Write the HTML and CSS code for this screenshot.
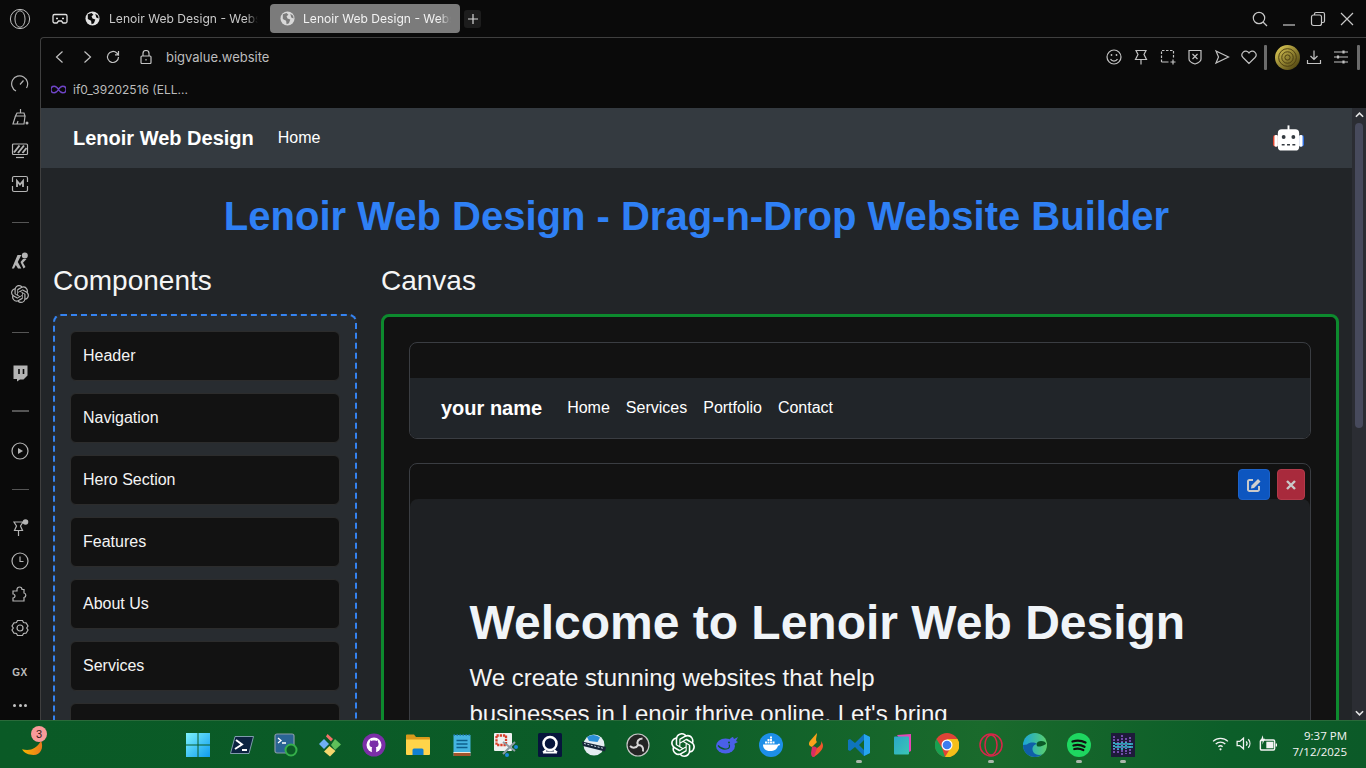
FILE: index.html
```html
<!DOCTYPE html>
<html lang="en">
<head>
<meta charset="utf-8">
<title>Lenoir Web Design</title>
<link rel="stylesheet" href="styles.css">
</head>
<body>
<svg class="defs" width="0" height="0"><defs>
  <path id="knot" d="M22.2819 9.8211a5.9847 5.9847 0 0 0-.5157-4.9108 6.0462 6.0462 0 0 0-6.5098-2.9A6.0651 6.0651 0 0 0 4.9807 4.1818a5.9847 5.9847 0 0 0-3.9977 2.9 6.0462 6.0462 0 0 0 .7427 7.0966 5.98 5.98 0 0 0 .511 4.9107 6.051 6.051 0 0 0 6.5146 2.9001A5.9847 5.9847 0 0 0 13.2599 24a6.0557 6.0557 0 0 0 5.7718-4.2058 5.9894 5.9894 0 0 0 3.9977-2.9001 6.0557 6.0557 0 0 0-.7475-7.0729zm-9.022 12.6081a4.4755 4.4755 0 0 1-2.8764-1.0408l.1419-.0804 4.7783-2.7582a.7948.7948 0 0 0 .3927-.6813v-6.7369l2.02 1.1686a.071.071 0 0 1 .038.052v5.5826a4.504 4.504 0 0 1-4.4945 4.4944zm-9.6607-4.1254a4.4708 4.4708 0 0 1-.5346-3.0137l.142.0852 4.783 2.7582a.7712.7712 0 0 0 .7806 0l5.8428-3.3685v2.3324a.0804.0804 0 0 1-.0332.0615L9.74 19.9502a4.4992 4.4992 0 0 1-6.1408-1.6464zM2.3408 7.8956a4.485 4.485 0 0 1 2.3655-1.9728V11.6a.7664.7664 0 0 0 .3879.6765l5.8144 3.3543-2.0201 1.1685a.0757.0757 0 0 1-.071 0l-4.8303-2.7865A4.504 4.504 0 0 1 2.3408 7.872zm16.5963 3.8558L13.1038 8.364 15.1192 7.2a.0757.0757 0 0 1 .071 0l4.8303 2.7913a4.4944 4.4944 0 0 1-.6765 8.1042v-5.6772a.79.79 0 0 0-.407-.667zm2.0107-3.0231l-.142-.0852-4.7735-2.7818a.7759.7759 0 0 0-.7854 0L9.409 9.2297V6.8974a.0662.0662 0 0 1 .0284-.0615l4.8303-2.7866a4.4992 4.4992 0 0 1 6.6802 4.66zM8.3065 12.863l-2.02-1.1638a.0804.0804 0 0 1-.038-.0567V6.0742a4.4992 4.4992 0 0 1 7.3757-3.4537l-.142.0805L8.704 5.459a.7948.7948 0 0 0-.3927.6813zm1.0976-2.3654l2.602-1.4998 2.6069 1.4998v2.9994l-2.5974 1.4997-2.6067-1.4997Z"/>
</defs></svg>
<div class="desktop">
  <div class="browser">
    <header class="tabbar">
      <div class="logo-cell">
        <svg class="i22" viewBox="0 0 24 24"><circle cx="12" cy="12" r="10.5"/><ellipse cx="12" cy="12" rx="5.5" ry="9"/></svg>
      </div>
      <div class="game-cell">
        <svg class="i16" viewBox="0 0 16 16"><path d="M2.5 3.5h11a1.5 1.5 0 0 1 1.5 1.5v5.5a1.5 1.5 0 0 1-1.5 1.5H11L9.5 10h-3L5 12H2.5A1.5 1.5 0 0 1 1 10.500V5a1.500 1.500 0 0 1 1.500-1.500z"/><path d="M4 7.500h2M10 7.500h2"/></svg>
      </div>
      <div class="tab">
        <svg class="globe" viewBox="0 0 16 16"><circle cx="8" cy="8" r="7.5"/><path class="land" d="M3 3.500 7 2l2 2-2 1.500L8 8l3 1-1.500 4L7 14l-.5-3.500L3 8.500zM11 3l3 2 .5 3-2.500-1z"/></svg>
        <span class="tab-text">Lenoir Web Design - Website Builder</span>
      </div>
      <div class="tab tab-active">
        <svg class="globe" viewBox="0 0 16 16"><circle cx="8" cy="8" r="7.500"/><path class="land" d="M3 3.500 7 2l2 2-2 1.500L8 8l3 1-1.500 4L7 14l-.5-3.500L3 8.500zM11 3l3 2 .5 3-2.500-1z"/></svg>
        <span class="tab-text">Lenoir Web Design - Website Builder</span>
      </div>
      <div class="newtab"><svg class="i10" viewBox="0 0 10 10"><path d="M5 0v10M0 5h10"/></svg></div>
      <div class="winctl">
        <svg class="i16" viewBox="0 0 16 16"><circle cx="7" cy="7" r="5.700"/><path d="m11 11 4 4"/></svg>
        <svg class="i16" viewBox="0 0 16 16"><path d="M2 14h12"/></svg>
        <svg class="i16" viewBox="0 0 16 16"><rect x="1.500" y="4" width="10" height="10.500" rx="2"/><path d="M4.500 4V3a1.500 1.500 0 0 1 1.500-1.500h7A1.500 1.500 0 0 1 14.500 3v7a1.500 1.500 0 0 1-1.500 1.500h-1.500"/></svg>
        <svg class="i16" viewBox="0 0 16 16"><path d="m2 2 12 12M14 2 2 14"/></svg>
      </div>
    </header>
    <div class="main">
      <aside class="sidebar">
        <div class="side-cell"><svg class="i18" viewBox="0 0 18 18"><path d="M5 16A8 8 0 1 1 15.500 13M9 9.500l3.500-4"/></svg></div>
        <div class="side-cell"><svg class="i18" viewBox="0 0 18 18"><path d="M9.500 1v4M6 5h7l1 3H4.500zM4.500 8 2 16h11l1-8M6 16l1-3"/><circle class="solid" cx="16" cy="15" r="1.500"/></svg></div>
        <div class="side-cell"><svg class="i18" viewBox="0 0 18 18"><rect x="1.500" y="2" width="15" height="10.500" rx="1"/><path class="stripes" d="M3 10.500l5.500-7M7 11l6-7.500M11.500 11l4-5"/><path d="M5 15.500h8"/></svg></div>
        <div class="side-cell"><svg class="i18" viewBox="0 0 18 18"><path d="M3 1.500h12a1.500 1.500 0 0 1 1.500 1.500v4M16.500 11v4a1.500 1.500 0 0 1-1.500 1.500H3A1.500 1.500 0 0 1 1.500 15v-4M1.500 7V3A1.500 1.500 0 0 1 3 1.500"/><path class="m-letter" d="M6 12V6l3 3.500L12 6v6"/></svg></div>
        <div class="side-sep"></div>
        <div class="side-cell"><svg class="i18" viewBox="0 0 18 18"><path class="solid" d="M6.500 3h3.800L6.800 10l3.500 6.500H7L4.800 13 3 16.500H.8z"/><path class="solid" d="M9.500 10 12 7h3.500L12 10.800l2.500 4.200-2 1.500z"/><circle class="solid" cx="13.800" cy="3.500" r="3"/></svg></div>
        <div class="side-cell"><svg class="i18 knot-ic" viewBox="0 0 24 24"><use href="#knot"/></svg></div>
        <div class="side-sep"></div>
        <div class="side-cell side-push"><svg class="i18" viewBox="0 0 18 18"><path class="solid" d="M2.500 1.500h14v10l-4 4H9L6 17.500V15H2.500z"/><path class="cut" d="M8 5v5M12.500 5v5"/></svg></div>
        <div class="side-sep"></div>
        <div class="side-cell side-push"><svg class="i18" viewBox="0 0 18 18"><circle cx="9" cy="9" r="8"/><path class="solid" d="M7 6l5 3-5 3z"/></svg></div>
        <div class="side-sep"></div>
        <div class="side-cell"><svg class="i18" viewBox="0 0 18 18"><path d="M3 3h9l-2.500 4 2 4.500H3.500l2-4.500zM7.500 11.500v5.500"/><circle class="solid" cx="14.500" cy="3" r="2.800"/></svg></div>
        <div class="side-cell"><svg class="i18" viewBox="0 0 18 18"><circle cx="9" cy="9" r="8"/><path d="M9 4.500V9.500h3.500"/></svg></div>
        <div class="side-cell"><svg class="i18" viewBox="0 0 18 18"><path d="M6 3.500a2.500 2.500 0 0 1 5 0H13v3.500a2.300 2.300 0 0 1 0 4.500V15H2v-3a2 2 0 0 0 0-4V5h4z"/></svg></div>
        <div class="side-cell"><svg class="i18" viewBox="0 0 18 18"><path d="M6.500 1.500h5L12.500 3.500l2.500.3 2 3.200-1.300 2 1.300 2-2 3.200-2.500.3-1 2h-5l-1-2L3 14.200 1 11l1.300-2L1 7l2-3.200 2.500-.3z"/><circle cx="9" cy="9" r="3"/></svg></div>
        <div class="side-gx">GX</div>
        <div class="side-dots"><i></i><i></i><i></i></div>
      </aside>
      <div class="frame">
        <div class="toolbar">
          <div class="nav-icons">
            <svg class="i14" viewBox="0 0 14 14"><path d="M9.500 1.500 3.500 7l6 5.500"/></svg>
            <svg class="i14" viewBox="0 0 14 14"><path d="m4.500 1.500 6 5.500-6 5.500"/></svg>
            <svg class="i14" viewBox="0 0 14 14"><path d="M12.500 7a5.500 5.500 0 1 1-1.700-4L12.500 4.800V1M12.500 4.800H9"/></svg>
          </div>
          <svg class="i14 lock" viewBox="0 0 14 14"><rect x="2" y="6" width="10" height="7.500" rx="1"/><path d="M4 6V3.500a3 3 0 0 1 6 0V6M7 9v1.500"/></svg>
          <span class="url">bigvalue.website</span>
          <div class="tools">
            <svg class="i16" viewBox="0 0 16 16"><circle cx="8" cy="8" r="7"/><path d="M4.500 10a4 4 0 0 0 7 0"/><circle class="solid" cx="5.500" cy="6" r=".9"/><circle class="solid" cx="10.500" cy="6" r=".9"/></svg>
            <svg class="i16" viewBox="0 0 16 16"><path d="M3 1.500h10l-2 4 2.500 5h-11L5 5.500zM8 10.500v5"/></svg>
            <svg class="i16" viewBox="0 0 16 16"><path stroke-dasharray="2.500 1.500" d="M1.500 13V1.500h12V10"/><path d="M1.500 13h7M13 10.500v5M10.500 13h5"/></svg>
            <svg class="i16" viewBox="0 0 16 16"><path d="M2 1.500h12v8.500c0 2-3 4-6 5-3-1-6-3-6-5z"/><path d="m5.500 5 5 5M10.500 5l-5 5"/></svg>
            <svg class="i16" viewBox="0 0 16 16"><path d="M2 2l12.500 6L2 14l2.500-6z"/></svg>
            <svg class="i16" viewBox="0 0 16 16"><path d="M8 14.500 2 8.500a3.800 3.800 0 0 1 0-5.200 3.800 3.800 0 0 1 6 .7 3.800 3.800 0 0 1 6-.7 3.800 3.800 0 0 1 0 5.200z"/></svg>
            <span class="vbar vbar-a"></span>
            <svg class="coin" viewBox="0 0 24 24"><defs><linearGradient id="coinG" x1="0" y1="0" x2="1" y2="1"><stop offset="0" stop-color="#e8d45c"/><stop offset="1" stop-color="#3f3508"/></linearGradient></defs><circle class="coin-bg" cx="12" cy="12" r="12" fill="url(#coinG)"/><circle cx="12" cy="12" r="8.500"/><circle cx="12" cy="12" r="5.500"/><circle cx="12" cy="12" r="2.500"/></svg>
            <svg class="i16 dl" viewBox="0 0 16 16"><path d="M8 1.500v8.500M4.500 7 8 10.500 11.500 7M1.500 11v3.500h13V11"/></svg>
            <svg class="i16" viewBox="0 0 16 16"><path d="M1 3h14M1 8h14M1 13h14"/><path class="thick" d="M10.500 1.500v3M5 6.500v3M10.500 11.500v3"/></svg>
            <span class="vbar vbar-b"></span>
          </div>
        </div>
        <div class="bookmarks">
          <svg class="inf" viewBox="0 0 16 9"><path d="M8 4.500C6.500 2 5 1 3.500 1a3.500 3.500 0 0 0 0 7C5 8 6.500 7 8 4.500 9.500 7 11 8 12.500 8a3.500 3.500 0 0 0 0-7C11 1 9.500 2 8 4.500z"/></svg>
          <span>if0_39202516 (ELL...</span>
        </div>
        <div class="viewport">
          <main class="page">
            <nav class="topnav">
              <span class="brand">Lenoir Web Design</span>
              <a class="navlink">Home</a>
              <svg class="robot" viewBox="0 0 32 26"><rect x="0" y="10" width="5" height="12" rx="2.500" fill="#e2452f"/><rect x="27" y="10" width="5" height="12" rx="2.500" fill="#2f6fe2"/><rect x="1.500" y="10" width="3.500" height="12" rx="1.500" fill="#fff"/><rect x="27" y="10" width="3.500" height="12" rx="1.500" fill="#fff"/><rect x="15" y="0" width="2" height="5" fill="#fff"/><rect x="5" y="4" width="22" height="22" rx="4" fill="#fff"/><circle cx="11" cy="12" r="2" fill="#343a40"/><circle cx="21" cy="12" r="2" fill="#343a40"/><path d="M9 20h3M14.500 20h3M20 20h3" stroke="#343a40" stroke-width="1.500"/></svg>
            </nav>
            <h1 class="title">Lenoir Web Design - Drag-n-Drop Website Builder</h1>
            <div class="columns">
              <section class="components">
                <h2>Components</h2>
                <div class="palette">
                  <div class="comp">Header</div>
                  <div class="comp">Navigation</div>
                  <div class="comp">Hero Section</div>
                  <div class="comp">Features</div>
                  <div class="comp">About Us</div>
                  <div class="comp">Services</div>
                  <div class="comp">Portfolio</div>
                </div>
              </section>
              <section class="canvas-col">
                <h2>Canvas</h2>
                <div class="canvas">
                  <div class="block">
                    <div class="block-head"></div>
                    <nav class="block-nav">
                      <span class="block-brand">your name</span>
                      <a class="block-link">Home</a>
                      <a class="block-link">Services</a>
                      <a class="block-link">Portfolio</a>
                      <a class="block-link">Contact</a>
                    </nav>
                  </div>
                  <div class="block">
                    <div class="block-head"></div>
                    <div class="block-actions">
                      <button class="act act-edit" type="button"><svg viewBox="0 0 16 16"><path d="M7 3H3.500A1.500 1.500 0 0 0 2 4.500v8A1.500 1.500 0 0 0 3.500 14h8a1.500 1.500 0 0 0 1.500-1.500V9"/><path class="solid" d="M5.500 8.500 12 2 14.500 4.500 8 11 5 11.500z"/></svg></button>
                      <button class="act act-del" type="button"><svg viewBox="0 0 16 16"><path d="m4 4 8 8M12 4l-8 8"/></svg></button>
                    </div>
                    <div class="hero">
                      <h1>Welcome to Lenoir Web Design</h1>
                      <p>We create stunning websites that help businesses in Lenoir thrive online. Let's bring your vision to life.</p>
                    </div>
                  </div>
                </div>
              </section>
            </div>
          </main>
          <div class="scrollbar">
            <svg class="sb-arrow" viewBox="0 0 10 6"><path d="M1 5l4-4 4 4"/></svg>
            <div class="sb-track"><div class="sb-thumb"></div></div>
            <svg class="sb-arrow" viewBox="0 0 10 6"><path d="M1 1l4 4 4-4"/></svg>
          </div>
        </div>
      </div>
    </div>
  </div>
  <footer class="taskbar">
    <div class="tb-left">
      <svg class="moon" viewBox="0 0 24 20"><defs><linearGradient id="moonG" x1="0" y1="0" x2="1" y2="0"><stop offset="0" stop-color="#f7b500"/><stop offset="1" stop-color="#e9791e"/></linearGradient></defs><path fill="url(#moonG)" d="M1 13c8 2 15 0 20-9 3 7 0 15-8 15C8 19 3 17 1 13z"/></svg>
      <span class="badge">3</span>
    </div>
    <div class="tb-center">
      <div class="tb-i"><svg viewBox="0 0 24 24"><defs><linearGradient id="win" x1="0" y1="0" x2="1" y2="1"><stop offset="0" stop-color="#7cf2fb"/><stop offset="1" stop-color="#0f9bf0"/></linearGradient></defs><path fill="url(#win)" d="M0 0h11.500v11.500H0zM12.500 0H24v11.500H12.500zM0 12.500h11.500V24H0zM12.500 12.500H24V24H12.500z"/></svg></div>
      <div class="tb-i"><svg viewBox="0 0 24 24"><path fill="#0c2340" stroke="#9db4cc" stroke-width=".8" d="M5 3.500h18.500L19 20.500H.5z"/><path fill="none" stroke="#fff" stroke-width="2" d="m6 7 6 4.500L5 16M12 17h5"/></svg></div>
      <div class="tb-i"><svg viewBox="0 0 24 24"><rect x="1" y="1" width="19" height="19" rx="2" fill="#2a6494" stroke="#8a9aa8"/><path fill="none" stroke="#fff" stroke-width="1.300" d="m4 5 3 2.500L4 10M8 10h4"/><circle cx="17" cy="17" r="5.500" fill="#0b5a27" stroke="#35b04a" stroke-width="2"/></svg></div>
      <div class="tb-i"><svg viewBox="0 0 24 24"><path fill="#f4736a" d="M9.500 1 15 6l-2 2.500L8 3.500z"/><path fill="#6fb0f5" d="M6 6l5 5-5 5-5-5z"/><path fill="#5fbf5a" d="M17 6l6 5.500-6 5.500-4-5z"/><path fill="#f5d76e" d="M11.500 13l6 5-5.500 5.500-6-5z"/></svg></div>
      <div class="tb-i"><svg viewBox="0 0 24 24"><circle cx="12" cy="12" r="11.500" fill="#7b2fa8"/><circle cx="12" cy="12" r="7.500" fill="#fff"/><path fill="#7b2fa8" d="M12 7.500c-1 0-1.800.2-2.300.4L8.300 7.200c-.3.7-.3 1.400-.2 1.900-.5.600-.7 1.300-.7 2 0 2.300 1.500 3 2.900 3.200-.3.300-.5.700-.5 1.200V20h4.400v-4.500c0-.5-.2-.9-.5-1.200 1.400-.2 2.900-.9 2.900-3.200 0-.7-.2-1.400-.7-2 .1-.5.100-1.200-.2-1.900l-1.400.7c-.5-.2-1.300-.4-2.300-.4z"/></svg></div>
      <div class="tb-i"><svg viewBox="0 0 24 24"><path fill="#d99a1c" d="M0 2.500a1 1 0 0 1 1-1h7l2 2.500h13a1 1 0 0 1 1 1V10H0z"/><path fill="#ffd44a" d="M0 6.500h24V21a1 1 0 0 1-1 1H1a1 1 0 0 1-1-1z"/><path fill="#1080d0" d="M6.500 17a1.500 1.500 0 0 1 1.500-1.500h8a1.500 1.500 0 0 1 1.500 1.500v5h-11z"/></svg></div>
      <div class="tb-i"><svg viewBox="0 0 24 24"><rect x="3.500" y="2" width="17" height="21" fill="#44b4e0"/><rect x="3.500" y="20" width="17" height="3" fill="#a2552a"/><rect x="3.500" y="19" width="17" height="1" fill="#f2e8d5"/><path stroke="#0d5f8c" stroke-width="1.500" d="M6.500 7.500h11M6.500 11h11M6.500 14.500h11"/><path stroke="#1d76a8" stroke-width="1.300" stroke-dasharray="1.500 1.500" d="M3.500 2h17"/></svg></div>
      <div class="tb-i"><svg viewBox="0 0 24 24"><rect x="0" y="0" width="18" height="18" rx="1" fill="#eef2f2"/><rect x="2.500" y="2.500" width="9.500" height="9.500" fill="none" stroke="#d9402a" stroke-width="2.300" stroke-dasharray="2.300 .9"/><path stroke="#8d9ba3" stroke-width="2" d="m9 9 12 9M21 9 9 21"/><circle cx="22" cy="14" r="2" fill="#1c8ad9"/><circle cx="13" cy="22" r="2" fill="#1c8ad9"/></svg></div>
      <div class="tb-i"><svg viewBox="0 0 24 24"><rect width="24" height="24" rx="1.500" fill="#07153c"/><circle cx="12" cy="10.500" r="6.500" fill="none" stroke="#fff" stroke-width="2.500"/><path fill="none" stroke="#fff" stroke-width="2" d="M5 19.500h14M8 17l-3 2.500M16 17l3 2.500"/></svg></div>
      <div class="tb-i"><svg viewBox="0 0 24 24"><circle cx="12" cy="12" r="10.500" fill="#e4edf2"/><path fill="#2b8fd8" d="M5 4a10.500 10.500 0 0 1 13 .5l-2.500 4.500L7 8z"/><path fill="#16263a" d="M0 8.500 24 14l-1 4.500L1 13z"/><path stroke="#c9d6e2" stroke-width="1" stroke-dasharray="2 1.500" d="M2 10.500l20 5"/></svg></div>
      <div class="tb-i"><svg viewBox="0 0 24 24"><circle cx="12" cy="12" r="11" fill="#242424" stroke="#c7c7c7"/><path fill="none" stroke="#d8d8d8" stroke-width="2" d="M12 12C10.500 9 12 5.500 16.500 5.500M12 12c3.200-.2 6 2 5 6.500M12 12c-1.500 2.800-5 3.800-8 1"/></svg></div>
      <div class="tb-i"><svg class="knot-white" viewBox="0 0 24 24"><use href="#knot"/></svg></div>
      <div class="tb-i"><svg viewBox="0 0 24 24"><ellipse cx="10.500" cy="13" rx="9.500" ry="7.500" fill="#4a60e8"/><path fill="#4a60e8" d="M14 8c1-3 3-4 4-4l1 2 4-2-2 4 2 1-5 2.500-1 5z"/><path fill="none" stroke="#0b5a27" stroke-width="1.200" d="M3 12.500c3 3.500 7 4 10 3 1.500-.7 2-2.500 1-4"/><circle cx="14" cy="9.500" r="1" fill="#0b5a27"/></svg></div>
      <div class="tb-i"><svg viewBox="0 0 24 24"><circle cx="12" cy="12" r="12" fill="#1d8fe8"/><path fill="#fff" d="M4 11.500h14c1 0 1.500-.7 2-1 .7.300 1 1 1 1.500-.7.500-1.300.500-2 .7-1 3.300-3.500 5.300-8 5.300-4.500 0-7-2.500-7-6.500zM6 8.500h2v2H6zM8.500 8.500h2v2h-2zM11 8.500h2v2h-2zM8.500 6h2v2h-2zM11 6h2v2h-2zM11 3.500h2v2h-2zM13.500 8.500h2v2h-2z"/></svg></div>
      <div class="tb-i"><svg viewBox="0 0 24 24"><path fill="#f9a21b" d="M14 0 7 8c-2 3-1 5 2 6l5-5c-2-2 0-6 0-9z"/><path fill="#f0562c" d="M18 8c1 3-1 5-4 7l-5 6c-1 1 0 3 2 3 3-2 9-7 9-11 0-2-1-4-2-5z"/><path fill="#d92d63" d="M9 14c2-1 4 0 5 1l-3 9c-2 0-3-2-3-4z"/></svg></div>
      <div class="tb-i"><svg viewBox="0 0 24 24"><path fill="#0f74bd" d="M17 1l6 3v16l-6 3-9-9-5 4-2-1V7l2-1 5 4zM17 7l-5 5 5 5z"/><path fill="#26a5ee" d="M17 1l6 3v16l-6 3z"/></svg></div>
      <div class="tb-i"><svg viewBox="0 0 24 24"><defs><linearGradient id="pk" x1="0" y1="0" x2="1" y2="1"><stop offset="0" stop-color="#2aa6c9"/><stop offset="1" stop-color="#3bc6b4"/></linearGradient></defs><path fill="#e547b8" d="M6 2l14-1v17l-2 1z"/><rect x="3" y="3.500" width="15" height="18" rx="1" fill="url(#pk)"/></svg></div>
      <div class="tb-i"><svg viewBox="0 0 24 24"><circle cx="12" cy="12" r="12" fill="#de4437"/><path fill="#f5bf19" d="M12 6h10.500A12 12 0 0 1 10 24l5.500-9z"/><path fill="#19a050" d="M1.500 6 7 15l3 9A12 12 0 0 1 1.500 6z"/><circle cx="12" cy="12" r="5.500" fill="#fff"/><circle cx="12" cy="12" r="4.300" fill="#3c7cf0"/></svg></div>
      <div class="tb-i"><svg viewBox="0 0 24 24"><g fill="none" stroke="#d8264a" stroke-width="1.500"><circle cx="12" cy="12" r="11"/><ellipse cx="12" cy="12" rx="6" ry="10"/></g></svg></div>
      <div class="tb-i"><svg viewBox="0 0 24 24"><defs><linearGradient id="ed" x1="0" y1="0" x2="1" y2="0"><stop offset="0" stop-color="#1ba5d8"/><stop offset="1" stop-color="#5bd06c"/></linearGradient></defs><circle cx="12" cy="12" r="12" fill="url(#ed)"/><path fill="#0f5fa8" d="M0 12c0 7 5 12 12 12 3 0 5-1 7-2.500-5 1.500-9-1-9.500-5-.3-2.500 1.500-5 4.500-5.500-3-2-7-2-10 .500z"/><path fill="#0b5a27" d="M23 11c0-2-2-3-5-3-4 0-5 3-4 5 1 1 4 1 9-2z"/></svg></div>
      <div class="tb-i"><svg viewBox="0 0 24 24"><circle cx="12" cy="12" r="12" fill="#1ed760"/><path fill="none" stroke="#111" stroke-width="2.300" stroke-linecap="round" d="M5.500 8.500c4-1.200 9-1 13 1M6.500 12.500c3.500-1 7.500-.700 11 1.200M7.300 16c3-.8 6-.5 9 1"/></svg></div>
      <div class="tb-i"><svg viewBox="0 0 24 24"><rect width="24" height="24" fill="#1e1a3a"/><path stroke="#8d5fd0" stroke-width="1.500" stroke-dasharray="2 1" d="M3 3v18M7 6v15M11 2v20M15 5v16M19 4v17"/><path stroke="#35c5d8" stroke-width="1.500" stroke-dasharray="2 1" d="M3 9v7M7 10v7M11 9v8M15 9v7M19 10v6M21 10v6M5 10v6M9 10v6M13 10v6M17 10v6"/></svg></div>
    </div>
    <div class="tb-tray">
      <svg class="tray-ic" viewBox="0 0 16 16"><path d="M1 6a10 10 0 0 1 14 0M3.500 8.500a6.500 6.500 0 0 1 9 0M6 11a3 3 0 0 1 4 0"/><circle class="solid" cx="8" cy="13.500" r="1"/></svg>
      <svg class="tray-ic" viewBox="0 0 16 16"><path d="M2 6h2.500L8 3v10L4.500 10H2zM10.500 6a3 3 0 0 1 0 4M12.500 4a6 6 0 0 1 0 8"/></svg>
      <svg class="tray-ic tray-batt" viewBox="0 0 16 16"><rect x="2" y="5" width="12" height="8.500" rx="1"/><rect class="solid" x="7" y="6.500" width="6" height="5.500"/><path class="solid" d="M4 1 2 6h2l-.5 3L6 4H4.500z"/><path d="M15.500 8v2.500"/></svg>
      <div class="clock"><span>9:37 PM</span><span>7/12/2025</span></div>
    </div>
  </footer>
</div>
</body>
</html>
```
FILE: styles.css
```css
* { box-sizing: border-box; }
html, body { margin: 0; padding: 0; height: 100%; overflow: hidden; }
body { font-family: "Liberation Sans", Arial, sans-serif; background: #0a0a0a; color: #fff; }
svg { display: block; flex: none; fill: none; stroke: #cfcfcf; stroke-width: 1.2; }
svg .solid { fill: currentColor; stroke: none; color: #cfcfcf; }
.defs { position: absolute; }

.desktop { width: 1366px; height: 768px; display: flex; flex-direction: column; }
.browser { height: 720px; display: flex; flex-direction: column; background: #0a0a0a; }

.i10 { width: 10px; height: 10px; }
.i14 { width: 14px; height: 14px; }
.i16 { width: 16px; height: 16px; }
.i18 { width: 18px; height: 18px; }
.i22 { width: 22px; height: 22px; }

/* tab strip */
.tabbar { height: 37px; display: flex; align-items: center; font-family: Inter, "Liberation Sans", sans-serif; font-size: 12.100px; }
.logo-cell { width: 41px; display: flex; justify-content: center; }
.logo-cell svg { stroke: #d0d0d0; stroke-width: 1; margin-right: 1px; }
.game-cell { width: 37px; padding-left: 11px; }
.game-cell svg { stroke: #e0e0e0; stroke-width: 1.300; }
.tab { width: 187px; height: 29px; display: flex; align-items: center; gap: 9px; padding: 0 7px 0 7px; color: #c9c9c9; border-radius: 4px; }
.tab-active { width: 190px; margin-left: 5px; gap: 8px; padding: 0 9px 0 10px; background: #7b7b7b; color: #f2f2f2; }
.tab-text { white-space: nowrap; overflow: hidden; flex: 1; -webkit-mask-image: linear-gradient(90deg, #000 92%, transparent); mask-image: linear-gradient(90deg, #000 92%, transparent); }
.globe { width: 15px; height: 15px; stroke: none; }
.globe circle { fill: #e2e2e2; }
.globe .land { fill: #0a0a0a; }
.tab-active .globe circle { fill: #d8d8d8; }
.tab-active .globe .land { fill: #7b7b7b; }
.newtab { width: 17px; height: 18px; margin-left: 4px; border-radius: 3px; background: #1d1d1d; display: flex; align-items: center; justify-content: center; }
.newtab svg { stroke: #d8d8d8; }
.winctl { margin-left: auto; display: flex; gap: 13px; padding-right: 11px; }
.winctl svg { stroke: #c8c8c8; }

.main { flex: 1; display: flex; min-height: 0; }

/* speed dial sidebar */
.sidebar { width: 40px; padding-top: 30px; display: flex; flex-direction: column; align-items: center; }
.side-cell { height: 33.500px; display: flex; align-items: center; justify-content: center; flex: none; }
.side-push { margin-top: 2px; }
.side-cell svg { stroke: #b4b4b4; }
.side-cell svg .solid { color: #b4b4b4; }
.side-cell .cut { stroke: #0a0a0a; stroke-width: 1.600; }
.side-cell .m-letter { stroke-width: 1.800; }
.side-cell .stripes { stroke-width: 2; }
.side-cell .knot-ic { fill: #b4b4b4; stroke: none; }
.side-sep { height: 43px; width: 17px; flex: none; display: flex; align-items: center; }
.side-sep::after { content: ""; display: block; width: 100%; height: 1.500px; background: #555; }
.side-gx { height: 44px; margin-top: 5px; display: flex; align-items: center; font-size: 10px; font-weight: 700; color: #bdbdbd; letter-spacing: .5px; }
.side-dots { height: 22px; display: flex; align-items: center; gap: 2.500px; }
.side-dots i { width: 3px; height: 3px; border-radius: 50%; background: #c4c4c4; }

/* browser frame */
.frame { flex: 1; min-width: 0; display: flex; flex-direction: column; border-left: 1px solid #3f3f3f; border-top: 1px solid #3f3f3f; border-top-left-radius: 4px; }
.toolbar { height: 38px; display: flex; align-items: center; padding-left: 12px; font-family: Inter, "Liberation Sans", sans-serif; font-size: 13px; color: #bdbdbd; }
.toolbar svg { stroke: #c2c2c2; }
.nav-icons { display: flex; gap: 12.500px; }
.lock { margin-left: 19px; }
.url { margin-left: 13px; }
.tools { margin-left: auto; display: flex; align-items: center; gap: 11px; padding-right: 6px; }
.tools .solid { color: #c2c2c2; }
.tools .thick { stroke-width: 2.200; }
.vbar { width: 3.500px; height: 25px; background: #6b6b6b; border-radius: 1px; }
.vbar-a { margin: 0 -3px 0 -4px; }
.vbar-b { margin-left: -3.500px; }
.coin { width: 25px; height: 25px; }
.dl { margin-left: -5px; }
.toolbar .coin circle { stroke: #4a3c10; stroke-width: .9; }
.toolbar .coin .coin-bg { stroke: none; }
.bookmarks { height: 32px; display: flex; align-items: center; gap: 7px; padding-left: 10px; padding-bottom: 6px; font-family: Inter, "Liberation Sans", sans-serif; font-size: 12px; color: #bcbcbc; }
.inf { width: 15px; height: 9px; stroke: #6f45c8; stroke-width: 1.500; }

/* website */
.viewport { flex: 1; min-height: 0; display: flex; }
.page { flex: 1; min-width: 0; overflow: hidden; background: #222528; }
.scrollbar { width: 14px; background: #2b2d33; display: flex; flex-direction: column; align-items: center; padding: 4px 0; }
.sb-arrow { width: 9px; height: 6px; stroke: #e4e4e4; stroke-width: 1.800; }
.sb-track { flex: 1; width: 8px; padding-top: 5px; }
.sb-thumb { height: 305px; background: #474a5c; border-radius: 4px; }

.topnav { height: 60px; background: #343a40; display: flex; align-items: center; padding: 0 48px 0 32px; }
.brand { font-size: 20px; font-weight: 700; margin-right: 24px; }
.navlink { font-size: 16px; }
.robot { width: 31px; height: 26px; margin-left: auto; stroke: none; }

.title { margin: 24px 0 0; height: 48px; line-height: 48px; text-align: center; font-size: 40px; font-weight: 700; color: #2f80f5; }
.columns { display: flex; gap: 24px; padding: 0 13px 0 12px; margin-top: 24px; }
.components { width: 304px; flex: none; }
.canvas-col { flex: 1; min-width: 0; }
h2 { margin: 0 0 16px; font-size: 28px; font-weight: 400; line-height: 34px; color: #f5f5f5; }

.palette { border: 2px dashed #3583f0; border-radius: 8px; background: #282c30; padding: 15px; display: flex; flex-direction: column; gap: 12px; }
.comp { height: 50px; line-height: 48px; padding: 0 12px; background: #121212; border: 1px solid #2c2c2c; border-radius: 6px; font-size: 16px; color: #f4f4f4; }

.canvas { height: 600px; border: 3px solid #0d8a2e; border-radius: 8px; background: #121212; padding: 25px; display: flex; flex-direction: column; gap: 24px; }
.block { position: relative; border: 1px solid #3a3d42; border-radius: 8px; background: #121212; overflow: hidden; flex: none; }
.block-head { height: 35px; }
.block-nav { height: 60px; background: #212529; display: flex; align-items: center; padding: 0 31px; font-size: 16px; }
.block-brand { font-size: 20px; font-weight: 700; margin-right: 25px; }
.block-link { margin-right: 16px; }
.block-actions { position: absolute; top: 5px; right: 5px; display: flex; gap: 7px; }
.act { width: 32px; height: 31px; padding: 0; border: 1px solid transparent; border-radius: 4px; display: flex; align-items: center; justify-content: center; }
.act svg { width: 16px; height: 16px; stroke: #c9c9c9; stroke-width: 2; }
.act-edit { background: #0d56c0; border-color: #1c62c8; }
.act-del { width: 28px; background: #a82a3c; border-color: #b23a4a; }
.act-del svg { stroke-width: 2.400; }
.hero { background: #1e2023; border-radius: 8px 8px 0 0; padding: 95px 60px 60px 59.500px; height: 500px; }
.hero h1 { margin: 0 0 8px; font-size: 48px; line-height: 58px; font-weight: 700; color: #f0f4f8; }
.hero p { margin: 0; max-width: 480px; font-size: 24px; line-height: 36px; color: #f5f5f5; }

/* taskbar */
.taskbar { height: 48px; position: relative; display: flex; align-items: center; background: linear-gradient(90deg, #0a5a26, #0b5c28 45%, #1a6a2c 72%, #0c5e29 90%, #0c5a28); border-top: 1px solid #2a6a3a; }
.tb-left { width: 176px; padding-left: 21px; position: relative; height: 100%; display: flex; align-items: center; }
.moon { width: 23px; height: 19px; stroke: none; margin-top: 3px; }
.badge { position: absolute; left: 31px; top: 5px; width: 16px; height: 16px; border-radius: 50%; background: #f99a9a; color: #3a1a1a; font-size: 11px; line-height: 16px; text-align: center; }
.tb-center { display: flex; }
.tb-i { width: 44.050px; height: 44px; display: flex; align-items: center; justify-content: center; position: relative; }
.tb-i svg { width: 24px; height: 24px; stroke: none; }
.tb-i .knot-white { fill: #fff; }
.tb-i:nth-child(16)::after, .tb-i:nth-child(19)::after, .tb-i:nth-child(21)::after, .tb-i:nth-child(22)::after { content: ""; position: absolute; bottom: 4px; left: 19px; width: 6px; height: 3px; border-radius: 2px; background: #a9b8ab; }
.tb-tray { margin-left: auto; display: flex; align-items: center; gap: 6px; padding-right: 19px; margin-top: -2px; }
.tray-ic { width: 17px; height: 17px; stroke: #f2f2f2; stroke-width: 1.200; }
.tray-batt { width: 19px; height: 19px; }
.tray-ic .solid { color: #f2f2f2; }
.clock { width: 63px; margin-left: 1px; display: flex; flex-direction: column; align-items: flex-end; gap: 2px; font-family: "Open Sans", "Noto Sans", sans-serif; font-size: 11.500px; line-height: 14px; color: #f4f4f4; }
```
